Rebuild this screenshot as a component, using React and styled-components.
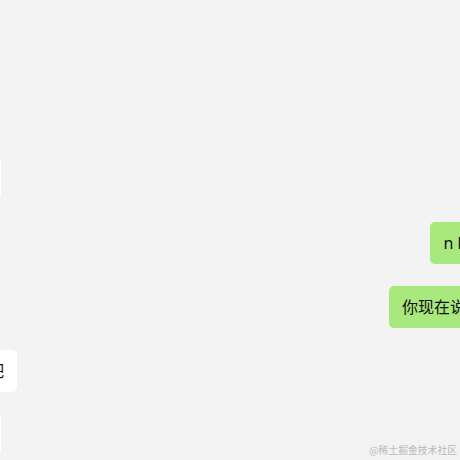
import React from 'react'
import styled, { createGlobalStyle } from 'styled-components'

const messages = [
  { id: 1, mine: false, text: '你好呀朋友' },
  { id: 2, mine: true, text: 'n k是什么' },
  { id: 3, mine: true, text: '你现在说什么呢' },
  { id: 4, mine: false, text: '我们一起去吧' },
  { id: 5, mine: false, text: '好的没问题' },
]

const GlobalStyle = createGlobalStyle`
  html, body {
    margin: 0;
    padding: 0;
    background: #f3f3f3;
  }
  * { box-sizing: border-box; }
`

const Page = styled.div`
  position: relative;
  width: 460px;
  height: 460px;
  overflow: hidden;
  background: #f3f3f3;
  font-family: "Noto Sans", "Noto Sans CJK SC", sans-serif;
`

const List = styled.div`
  display: flex;
  flex-direction: column;
  gap: 22px;
  padding-top: 158px;
  margin: 0 -67px 0 -105px;
`

const Row = styled.div`
  display: flex;
  justify-content: ${p => (p.$mine ? 'flex-end' : 'flex-start')};
`

const Bubble = styled.div`
  height: 42px;
  padding: 12px 13px;
  border-radius: 5px;
  background: ${p => (p.$mine ? '#a9e87c' : '#ffffff')};
  color: #111;
  font-size: 16px;
  line-height: 18px;
  white-space: nowrap;
`

const Watermark = styled.div`
  position: absolute;
  right: 3px;
  bottom: 3px;
  font-size: 9.8px;
  line-height: 14px;
  color: #b8b8b8;
  font-family: "Noto Sans CJK SC", sans-serif;
`

const App = () => {
  return (
    <Page>
      <GlobalStyle />
      <List>
        {messages.map(m => (
          <Row key={m.id} $mine={m.mine}>
            <Bubble $mine={m.mine}>{m.text}</Bubble>
          </Row>
        ))}
      </List>
      <Watermark>@稀土掘金技术社区</Watermark>
    </Page>
  )
}

export default App
